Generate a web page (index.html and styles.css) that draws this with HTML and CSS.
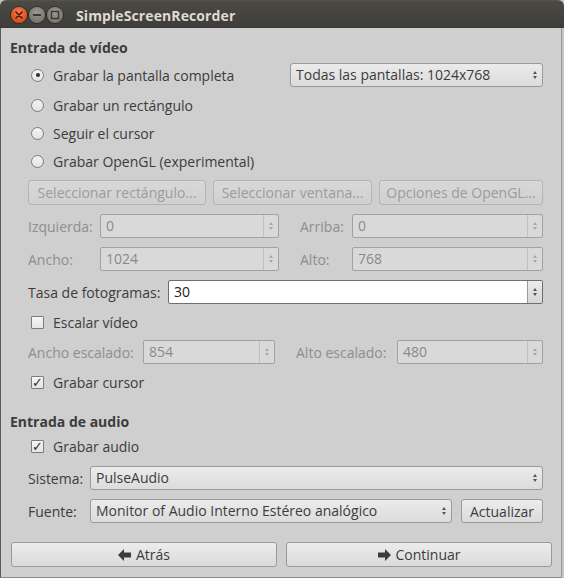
FILE: index.html
```html
<!DOCTYPE html>
<html lang="es">
<head>
    <meta charset="UTF-8">
    <title>SimpleScreenRecorder</title>
    <link rel="stylesheet" href="styles.css">
</head>
<body>
    <div class="window">
        <div class="titlebar">
            <div class="wm-buttons">
                <span class="wm wm-close">
                    <svg width="8" height="8" viewBox="0 0 8 8"><path d="M1 1 L7 7 M7 1 L1 7" stroke="#4a1a0a" stroke-width="1.6" stroke-linecap="round"/></svg>
                </span>
                <span class="wm wm-min">
                    <svg width="10" height="4" viewBox="0 0 10 4"><rect x="1" y="1" width="8" height="2" fill="#3a3935"/></svg>
                </span>
                <span class="wm wm-max">
                    <svg width="10" height="10" viewBox="0 0 10 10"><rect x="1.5" y="1.5" width="7" height="7" fill="none" stroke="#3a3935" stroke-width="1.4"/></svg>
                </span>
            </div>
            <div class="title">SimpleScreenRecorder</div>
        </div>

        <div class="content">
            <div class="heading heading-video">Entrada de vídeo</div>

            <div class="group">
                <div class="row row-screens">
                    <label class="radio"><span class="radio-box checked"></span>Grabar la pantalla completa</label>
                    <div class="combo combo-screens">Todas las pantallas: 1024x768<span class="combo-arrows"></span></div>
                </div>
                <div class="row row-radio row-rect">
                    <label class="radio"><span class="radio-box"></span>Grabar un rectángulo</label>
                </div>
                <div class="row row-radio">
                    <label class="radio"><span class="radio-box"></span>Seguir el cursor</label>
                </div>
                <div class="row row-radio">
                    <label class="radio"><span class="radio-box"></span>Grabar OpenGL (experimental)</label>
                </div>

                <div class="select-buttons">
                    <button class="btn" disabled>Seleccionar rectángulo...</button>
                    <button class="btn" disabled>Seleccionar ventana...</button>
                    <button class="btn" disabled>Opciones de OpenGL...</button>
                </div>

                <div class="grid grid-area">
                    <span class="lbl disabled">Izquierda:</span>
                    <div class="spin disabled">0<span class="spin-arrows"></span></div>
                    <span class="lbl lbl-second disabled">Arriba:</span>
                    <div class="spin disabled">0<span class="spin-arrows"></span></div>
                </div>
                <div class="grid grid-area grid-size">
                    <span class="lbl disabled">Ancho:</span>
                    <div class="spin disabled">1024<span class="spin-arrows"></span></div>
                    <span class="lbl lbl-second disabled">Alto:</span>
                    <div class="spin disabled">768<span class="spin-arrows"></span></div>
                </div>

                <div class="row row-fps">
                    <span class="lbl lbl-fps">Tasa de fotogramas:</span>
                    <div class="spin spin-active">30<span class="spin-arrows"></span></div>
                </div>

                <div class="row row-check row-scale">
                    <label class="check"><span class="check-box"></span>Escalar vídeo</label>
                </div>

                <div class="grid grid-scaled">
                    <span class="lbl disabled">Ancho escalado:</span>
                    <div class="spin disabled">854<span class="spin-arrows"></span></div>
                    <span class="lbl lbl-second disabled">Alto escalado:</span>
                    <div class="spin disabled">480<span class="spin-arrows"></span></div>
                </div>

                <div class="row row-check row-cursor">
                    <label class="check"><span class="check-box checked">&#10003;</span>Grabar cursor</label>
                </div>
            </div>

            <div class="heading heading-audio">Entrada de audio</div>

            <div class="group">
                <div class="row row-check row-audio">
                    <label class="check"><span class="check-box checked">&#10003;</span>Grabar audio</label>
                </div>
                <div class="row row-system">
                    <span class="lbl lbl-audio">Sistema:</span>
                    <div class="combo combo-grow">PulseAudio<span class="combo-arrows"></span></div>
                </div>
                <div class="row row-source">
                    <span class="lbl lbl-audio">Fuente:</span>
                    <div class="combo combo-grow">Monitor of Audio Interno Estéreo analógico<span class="combo-arrows"></span></div>
                    <button class="btn btn-refresh">Actualizar</button>
                </div>
            </div>

            <div class="nav-buttons">
                <button class="btn btn-nav">
                    <svg width="14" height="12" viewBox="0 0 14 12"><path d="M0 6 L6 0 L6 3.5 L13 3.5 L13 8.5 L6 8.5 L6 12 Z" fill="#3c3c3c"/></svg>
                    Atrás
                </button>
                <button class="btn btn-nav">
                    <svg width="14" height="12" viewBox="0 0 14 12"><path d="M14 6 L8 0 L8 3.5 L1 3.5 L1 8.5 L8 8.5 L8 12 Z" fill="#3c3c3c"/></svg>
                    Continuar
                </button>
            </div>
        </div>
    </div>
</body>
</html>
```

FILE: styles.css
```css
/* General styles */
html, body {
    margin: 0;
    padding: 0;
    background-color: #c4c4c4;
}

body {
    font-family: "Open Sans", "DejaVu Sans", sans-serif;
    font-size: 14px;
    color: #3c3c3c;
}

.window {
    width: 564px;
    height: 578px;
    display: flex;
    flex-direction: column;
    overflow: hidden;
}

/* Title bar */
.titlebar {
    height: 28px;
    flex: none;
    display: flex;
    align-items: center;
    background: linear-gradient(#57554f 0px, #4a4944 2px, #3f3e3a 26px, #3a3935 28px);
    border-radius: 6px 6px 0 0;
}

.wm-buttons {
    display: flex;
    align-items: center;
    gap: 2px;
    margin-left: 11px;
    margin-top: 2px;
}

.wm {
    width: 16px;
    height: 16px;
    border-radius: 50%;
    display: flex;
    align-items: center;
    justify-content: center;
    box-shadow: 0 0 0 1px rgba(0, 0, 0, 0.35);
}

.wm-close {
    background: radial-gradient(circle at 50% 35%, #f7805a, #e2531f 60%, #c9401a);
}

.wm-min,
.wm-max {
    background: radial-gradient(circle at 50% 35%, #9b9992, #7d7b74 60%, #6a6862);
}

.title {
    margin-left: 13px;
    margin-top: 2px;
    font-weight: bold;
    font-size: 14px;
    color: #dfdbd2;
    letter-spacing: 0.1px;
}

/* Window body */
.content {
    flex: 1;
    width: 562px;
    box-sizing: border-box;
    background-color: #cfcfcf;
    border-left: 1px solid #5a5a5a;
    border-right: 1px solid #9a9a9a;
    border-bottom: 1px solid #8a8a8a;
    padding: 0 9px 0 9px;
}

.heading {
    font-weight: bold;
    height: 22px;
    line-height: 22px;
}

.heading-video {
    margin-top: 9px;
}

.heading-audio {
    margin-top: 17px;
}

.group {
    padding-left: 18px;
    padding-right: 9px;
}

.row {
    display: flex;
    align-items: center;
    height: 24px;
}

.row-screens {
    margin-top: 4px;
    justify-content: space-between;
}

.row-radio {
    margin-top: 4px;
}

.row-radio.row-rect {
    margin-top: 6px;
}

/* Radio buttons and check boxes */
.radio,
.check {
    display: flex;
    align-items: center;
}

.radio-box {
    width: 11px;
    height: 11px;
    border-radius: 50%;
    border: 1px solid #7c7c7c;
    background: linear-gradient(#f4f4f4, #e2e2e2);
    margin-left: 3px;
    margin-right: 9px;
    position: relative;
}

.radio-box.checked::after {
    content: "";
    position: absolute;
    left: 3.5px;
    top: 3.5px;
    width: 4px;
    height: 4px;
    border-radius: 50%;
    background-color: #2e2e2e;
}

.check-box {
    width: 11px;
    height: 11px;
    border: 1px solid #7c7c7c;
    border-radius: 1px;
    background: linear-gradient(#f6f6f6, #e4e4e4);
    margin-left: 3px;
    margin-right: 9px;
    font-size: 13px;
    line-height: 11px;
    text-align: center;
    color: #2e2e2e;
    font-family: "DejaVu Sans", sans-serif;
    font-weight: bold;
}

.row-scale {
    margin-top: 6px;
}

.row-cursor {
    margin-top: 6px;
}

.row-audio {
    margin-top: 1px;
}

/* Combo boxes */
.combo {
    position: relative;
    height: 24px;
    box-sizing: border-box;
    border: 1px solid #9a9a9a;
    border-radius: 3px;
    background: linear-gradient(#ebebeb, #dcdcdc);
    padding: 0 20px 0 5px;
    line-height: 22px;
    white-space: nowrap;
}

.combo-screens {
    width: 253px;
}

.combo-grow {
    flex: 1;
}

.combo-arrows,
.spin-arrows {
    position: absolute;
    right: 0;
    top: 0;
    bottom: 0;
    width: 14px;
}

.combo-arrows::before,
.combo-arrows::after,
.spin-arrows::before,
.spin-arrows::after {
    content: "";
    position: absolute;
    left: 5px;
    border-left: 2.5px solid transparent;
    border-right: 2.5px solid transparent;
}

.combo-arrows::before,
.spin-arrows::before {
    top: 7px;
    border-bottom: 3px solid #555;
}

.combo-arrows::after,
.spin-arrows::after {
    bottom: 7px;
    border-top: 3px solid #555;
}

/* Push buttons */
.btn {
    font-family: inherit;
    font-size: 14px;
    color: #3c3c3c;
    height: 25px;
    box-sizing: border-box;
    border: 1px solid #9a9a9a;
    border-radius: 3px;
    background: linear-gradient(#ececec, #dadada);
    padding: 0 6px;
    margin: 0;
}

.btn:disabled {
    color: #9c9c9c;
    border-color: #b4b4b4;
    background: linear-gradient(#d8d8d8, #d0d0d0);
}

.select-buttons {
    display: grid;
    grid-template-columns: 178px 159px 164px;
    column-gap: 7px;
    margin-top: 7px;
}

.btn-refresh {
    width: 82px;
    height: 24px;
    margin-left: 9px;
    padding: 0;
}

/* Spin boxes and labels */
.grid {
    display: grid;
    align-items: center;
    height: 24px;
}

.grid-area {
    grid-template-columns: 72px 179px 73px 191px;
    margin-top: 9px;
}

.grid-size {
    margin-top: 9px;
}

.grid-scaled {
    grid-template-columns: 115px 132px 122px 146px;
    margin-top: 6px;
}

.lbl.disabled {
    color: #8e8e8e;
}

.lbl-second {
    padding-left: 21px;
}

.spin {
    position: relative;
    height: 24px;
    box-sizing: border-box;
    border: 1px solid #a2a2a2;
    border-radius: 2px;
    background-color: #d9d9d9;
    padding: 0 18px 0 5px;
    line-height: 22px;
}

.spin.disabled {
    color: #8a8a8a;
}

.spin .spin-arrows {
    border-left: 1px solid #c0c0c0;
}

.spin.disabled .spin-arrows::before {
    border-bottom-color: #a8a8a8;
}

.spin.disabled .spin-arrows::after {
    border-top-color: #a8a8a8;
}

.row-fps {
    margin-top: 9px;
}

.lbl-fps {
    width: 140px;
}

.spin-active {
    flex: 1;
    background-color: #ffffff;
    border-color: #6e6e6e;
    color: #222;
}

.spin-active .spin-arrows {
    background: linear-gradient(#ececec, #d6d6d6);
    border-left-color: #9a9a9a;
}

.row-system {
    margin-top: 8px;
}

.row-source {
    margin-top: 9px;
}

.lbl-audio {
    width: 62px;
}

/* Bottom navigation */
.nav-buttons {
    display: grid;
    grid-template-columns: 1fr 1fr;
    column-gap: 9px;
    margin-top: 19px;
    margin-left: 1px;
}

.btn-nav {
    height: 25px;
    display: flex;
    align-items: center;
    justify-content: center;
    gap: 4px;
}
```
